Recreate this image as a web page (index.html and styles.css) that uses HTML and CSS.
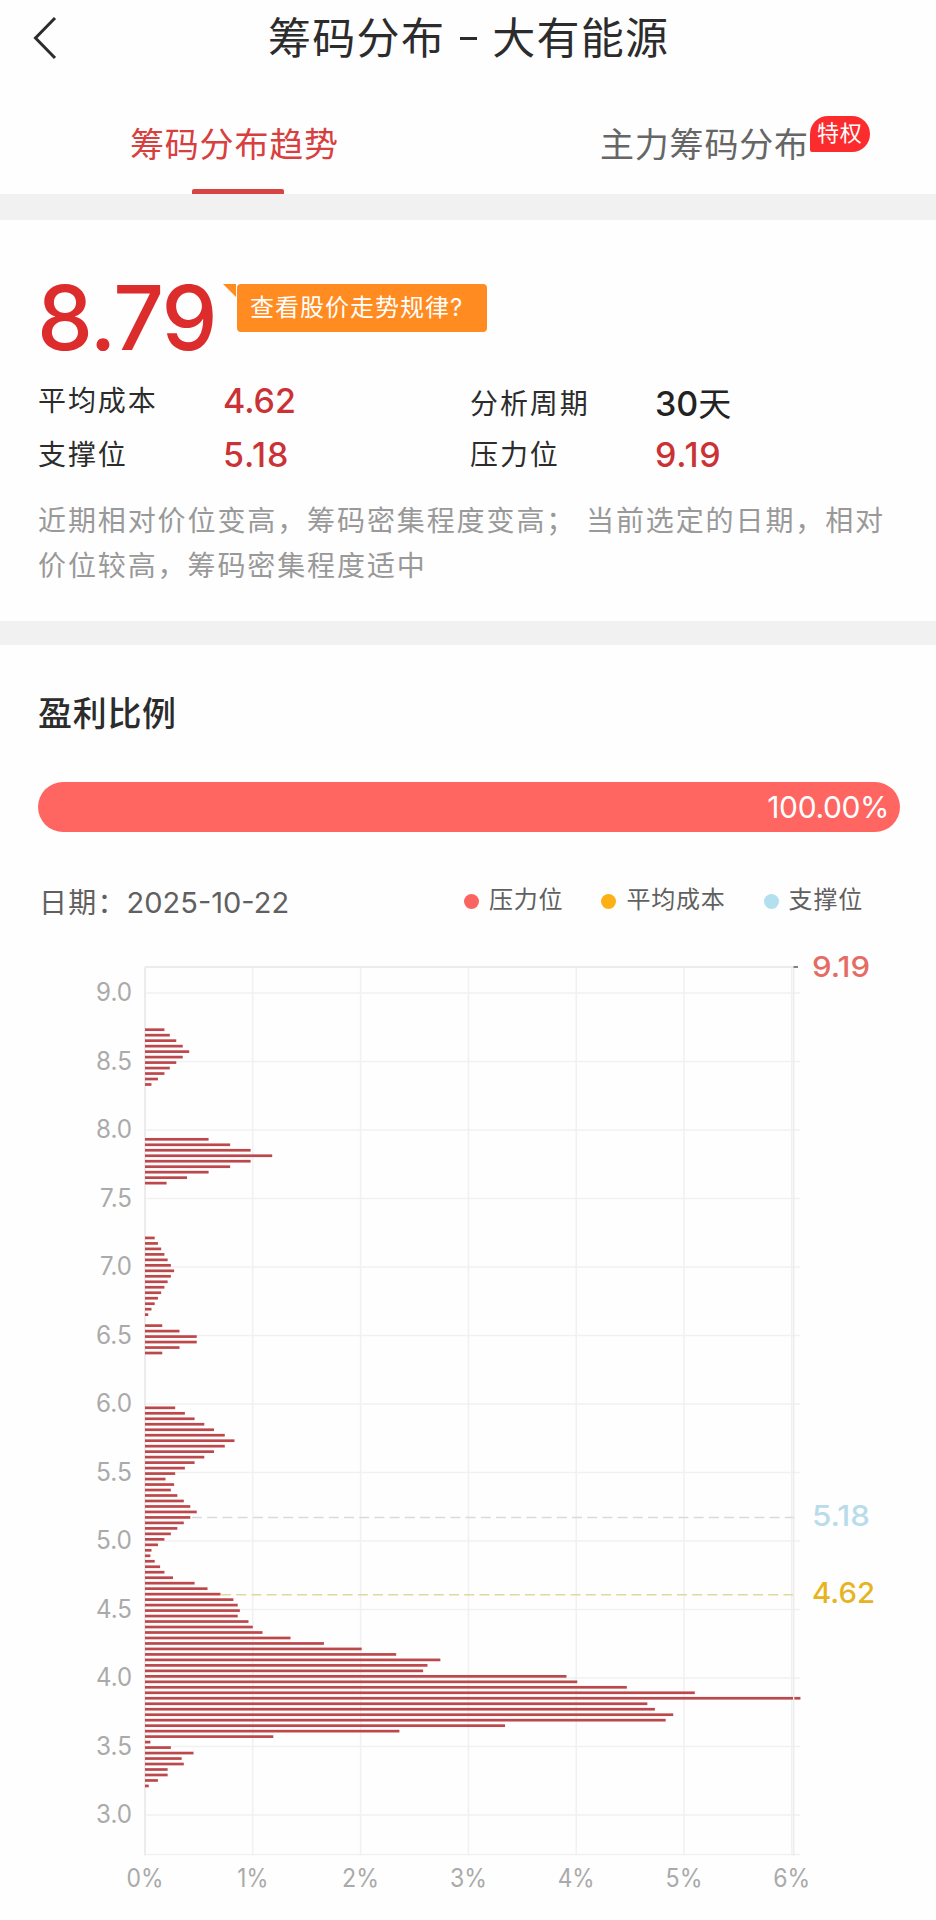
FILE: index.html
```html
<!DOCTYPE html>
<html lang="zh-CN">
<head>
    <meta charset="UTF-8">
    <meta name="viewport" content="width=device-width, initial-scale=1.0">
    <title>筹码分布 - 大有能源</title>
    <link rel="stylesheet" href="styles.css">
</head>
<body>

    <header class="header">
        <svg class="back" width="26" height="46" viewBox="0 0 26 46"><path d="M23 3 L3.5 23 L23 43"/></svg>
        <h1>筹码分布<span class="dash"></span>大有能源</h1>
    </header>

    <nav class="tabs">
        <div class="tab active"><span class="tab-text">筹码分布趋势</span></div>
        <div class="tab"><span class="tab-text">主力筹码分布</span><span class="badge">特权</span></div>
    </nav>

    <section class="summary">
        <div class="price-row">
            <span class="price">8.79</span>
            <svg class="tail" width="14" height="14" viewBox="0 0 14 14"><path d="M0 0 H13 V13 Z"/></svg>
            <span class="tip">查看股价走势规律?</span>
        </div>
        <div class="stats">
            <span class="label">平均成本</span><span class="value">4.62</span>
            <span class="label low">分析周期</span><span class="value dark low">30<span class="day">天</span></span>
            <span class="label">支撑位</span><span class="value wide">5.18</span>
            <span class="label">压力位</span><span class="value wide">9.19</span>
        </div>
        <p class="desc">近期相对价位变高，筹码密集程度变高； 当前选定的日期，相对<br>价位较高，筹码密集程度适中</p>
    </section>

    <section class="profit">
        <h2>盈利比例</h2>
        <div class="progress"><span>100.00%</span></div>
        <div class="info-row">
            <div class="date">日期：<span class="num">2025-10-22</span></div>
            <div class="legend">
                <span class="item"><i class="dot red"></i>压力位</span>
                <span class="item"><i class="dot orange"></i>平均成本</span>
                <span class="item"><i class="dot blue"></i>支撑位</span>
            </div>
        </div>
        <svg class="chart" id="chart" width="936" height="980" viewBox="0 940 936 980"></svg>
    </section>

    <script src="chart.js"></script>
</body>
</html>
```
FILE: styles.css
```css
* {
    box-sizing: border-box;
}
body {
    margin: 0;
    width: 936px;
    height: 1920px;
    overflow: hidden;
    background-color: #fefefe;
    color: #2c2c2c;
    font-family: Inter, "Noto Sans CJK SC", sans-serif;
    white-space: nowrap;
}
.header {
    display: flex;
    align-items: center;
    height: 76px;
    padding-left: 32px;
}
.back path {
    fill: none;
    stroke: #2c2c2c;
    stroke-width: 3;
}
h1 {
    display: flex;
    align-items: center;
    margin: 0 0 0 210px;
    font-size: 43px;
    font-weight: 400;
    line-height: 76px;
    letter-spacing: 1.3px;
}
.dash {
    width: 17px;
    height: 3px;
    margin: 0 15px;
    background-color: #2c2c2c;
}
.tabs {
    display: flex;
    height: 118px;
}
.tab {
    display: flex;
    width: 50%;
    height: 118px;
    padding-left: 130px;
    font-size: 34px;
    line-height: 137px;
    letter-spacing: 0.8px;
    color: #666;
}
.tab.active {
    flex-direction: column;
    justify-content: space-between;
    color: #d84040;
}
.tab.active .tab-text {
    height: 113px;
}
.tab.active::after {
    content: "";
    width: 92px;
    height: 5px;
    margin-left: 62px;
    border-radius: 2px 2px 0 0;
    background-color: #d64541;
}
.tab + .tab {
    padding-left: 132px;
}
.badge {
    width: 60px;
    height: 36px;
    margin: 40px 0 0 1px;
    border-radius: 18px 18px 18px 2px;
    background-color: #fb2b2e;
    color: #fff;
    font-size: 22px;
    line-height: 34px;
    text-align: center;
}
.summary {
    height: 451px;
    padding: 53px 38px 0;
    border-top: 26px solid #f1f1f1;
    border-bottom: 24px solid #f1f1f1;
}
.price-row {
    display: flex;
    align-items: flex-start;
    height: 98px;
}
.price {
    width: 185px;
    font-size: 89px;
    font-weight: 500;
    line-height: 90px;
    letter-spacing: -1.6px;
    text-indent: -1px;
    color: #dd2c2c;
}
.tail {
    margin-top: 11px;
}
.tail path {
    fill: #ff8b21;
}
.tip {
    width: 250px;
    height: 48px;
    margin-top: 11px;
    padding-left: 13px;
    border-radius: 4px;
    background-color: #ff8b21;
    color: #fff;
    font-size: 24px;
    line-height: 48px;
    letter-spacing: 1px;
}
.stats {
    display: grid;
    grid-template-columns: 185px 247px 185px 200px;
    grid-auto-rows: 54px;
    margin-top: 3px;
    line-height: 54px;
}
.label {
    font-size: 28px;
    letter-spacing: 1.9px;
}
.value {
    font-size: 34px;
    font-weight: 500;
    color: #cb3236;
}
.value.wide {
    letter-spacing: 0.8px;
}
.value.dark {
    color: #222;
}
.low {
    padding-top: 3px;
}
.day {
    font-size: 33px;
    font-weight: 400;
}
.desc {
    margin: 17px 0 0;
    font-size: 28px;
    line-height: 45px;
    letter-spacing: 1.9px;
    color: #999;
}
.profit {
    height: 1275px;
}
h2 {
    margin: 0;
    padding: 44px 38px 0;
    font-size: 34px;
    font-weight: 500;
    line-height: 50px;
    letter-spacing: 0.7px;
}
.progress {
    display: flex;
    justify-content: flex-end;
    width: 862px;
    height: 50px;
    margin: 43px 0 0 38px;
    padding-right: 11px;
    border-radius: 25px;
    background-color: #ff6661;
    color: #fff;
    font-size: 30px;
    line-height: 51px;
    letter-spacing: -0.4px;
}
.info-row {
    display: flex;
    height: 108px;
    padding-left: 39px;
    color: #606060;
}
.date {
    width: 425px;
    font-size: 28px;
    line-height: 141px;
    letter-spacing: 1.2px;
}
.num {
    font-size: 29px;
    letter-spacing: 0;
}
.legend {
    display: flex;
    align-items: flex-start;
    gap: 38px;
    padding-top: 56px;
    font-size: 24px;
    line-height: 24px;
    letter-spacing: 0.8px;
}
.item {
    display: flex;
    align-items: center;
}
.dot {
    width: 15px;
    height: 15px;
    margin: 3px 10px 0 0;
    border-radius: 50%;
}
.red {
    background-color: #fa6561;
}
.orange {
    background-color: #fbb114;
}
.blue {
    background-color: #b3e0ef;
}
.chart {
    display: block;
}
.chart text {
    font-family: Inter, sans-serif;
}
.chart .axis {
    fill: #aaa;
    font-size: 25px;
}
.chart .mark {
    font-size: 29px;
    font-weight: 500;
}
.chart .grid {
    stroke: #f1f1f1;
    stroke-width: 1.5;
}
.chart .frame {
    stroke: #ececec;
    stroke-width: 2;
}
.chart .bar {
    fill: #bd484c;
}
```
FILE: chart.js
```js
const svg = document.getElementById("chart");
const left = 145, top0 = 967, bottom = 1854.5, right = 800;
const pct = 107.8;   // width of 1%
const step = 5.48;   // distance between two price levels

// share of chips (in %) per price level, starting with the highest price
const groups = [
    [0, [0.18, 0.23, 0.29, 0.35, 0.41, 0.35, 0.29, 0.23, 0.18, 0.12, 0.06]],
    [20, [0.59, 0.79, 0.98, 1.18, 0.98, 0.79, 0.59, 0.39, 0.2]],
    [38, [0.09, 0.12, 0.15, 0.18, 0.21, 0.24, 0.27, 0.24, 0.21, 0.18, 0.15, 0.12, 0.09, 0.06, 0.03]],
    [54, [0.16, 0.32, 0.48, 0.48, 0.32, 0.16]],
    [69, [0.28, 0.37, 0.46, 0.55, 0.64, 0.74, 0.83, 0.74, 0.64, 0.55, 0.46, 0.37, 0.28, 0.19,
        0.27, 0.24, 0.3, 0.36, 0.42, 0.48, 0.42, 0.36, 0.3, 0.24, 0.18, 0.12, 0.06, 0.05,
        0.09, 0.14, 0.18, 0.26, 0.46, 0.58, 0.7, 0.82, 0.86, 0.88, 0.86, 0.96, 1.0, 1.09,
        1.35, 1.66, 2.01, 2.33, 2.74, 2.62, 2.58, 3.91, 4.01, 4.47, 5.1, 6.08, 4.66, 4.73,
        4.9, 4.83, 3.34, 2.36, 1.19, 0.05, 0.24, 0.45, 0.34, 0.36, 0.21, 0.21, 0.12, 0.035]]
];

function add(tag, attrs, text) {
    const el = document.createElementNS("http://www.w3.org/2000/svg", tag);
    for (const key in attrs) el.setAttribute(key, attrs[key]);
    if (text) el.textContent = text;
    svg.appendChild(el);
}

function line(x1, y1, x2, y2, cls) {
    add("line", { x1, y1, x2, y2, class: cls });
}

function label(x, y, cls, anchor, width, text, fill) {
    const attrs = { x, y, class: cls, "text-anchor": anchor, textLength: width, lengthAdjust: "spacingAndGlyphs" };
    if (fill) attrs.fill = fill;
    add("text", attrs, text);
}

// grid and axis labels
for (let i = 0; i <= 12; i++) {
    const y = 993 + i * 68.5;
    const price = (9 - i * 0.5).toFixed(1);
    line(left, y, right, y, "grid");
    label(132, y + 8, "axis", "end", price[0] === "7" ? 32 : 36, price);
}
for (let i = 0; i <= 6; i++) {
    const x = left + i * pct;
    line(x, top0, x, bottom + 1, i === 0 ? "frame" : "grid");
    label(x, 1887, "axis", "middle", i === 1 ? 31 : 37, i + "%");
}
line(left, top0, 794, top0, "frame");
line(left, bottom, right, bottom, "grid");

// marker lines
add("line", { x1: 192, y1: 1517.5, x2: 798, y2: 1517.5, stroke: "#d5dcda", "stroke-width": 1.3, "stroke-dasharray": "10 5.2" });
add("line", { x1: 221, y1: 1594.7, x2: 798, y2: 1594.7, stroke: "#dfd99c", "stroke-width": 1.6, "stroke-dasharray": "10 5.2" });

groups.forEach(([start, values]) => {
    values.forEach((v, i) => {
        add("rect", { x: left, y: 1029.7 + (start + i) * step - 1.35, width: v * pct, height: 2.7, class: "bar" });
    });
});

// right border and the tick of the top marker
add("line", { x1: 793.7, y1: top0, x2: 793.7, y2: bottom + 1, stroke: "#ececec", "stroke-width": 1.4 });
add("rect", { x: 793.5, y: 966, width: 4.5, height: 2, fill: "#8a8080" });

label(812, 976.5, "mark", "start", 58, "9.19", "#e56b65");
label(812, 1526, "mark", "start", 58, "5.18", "#b9dcea");
label(812, 1603, "mark", "start", 63, "4.62", "#e6b422");
```
